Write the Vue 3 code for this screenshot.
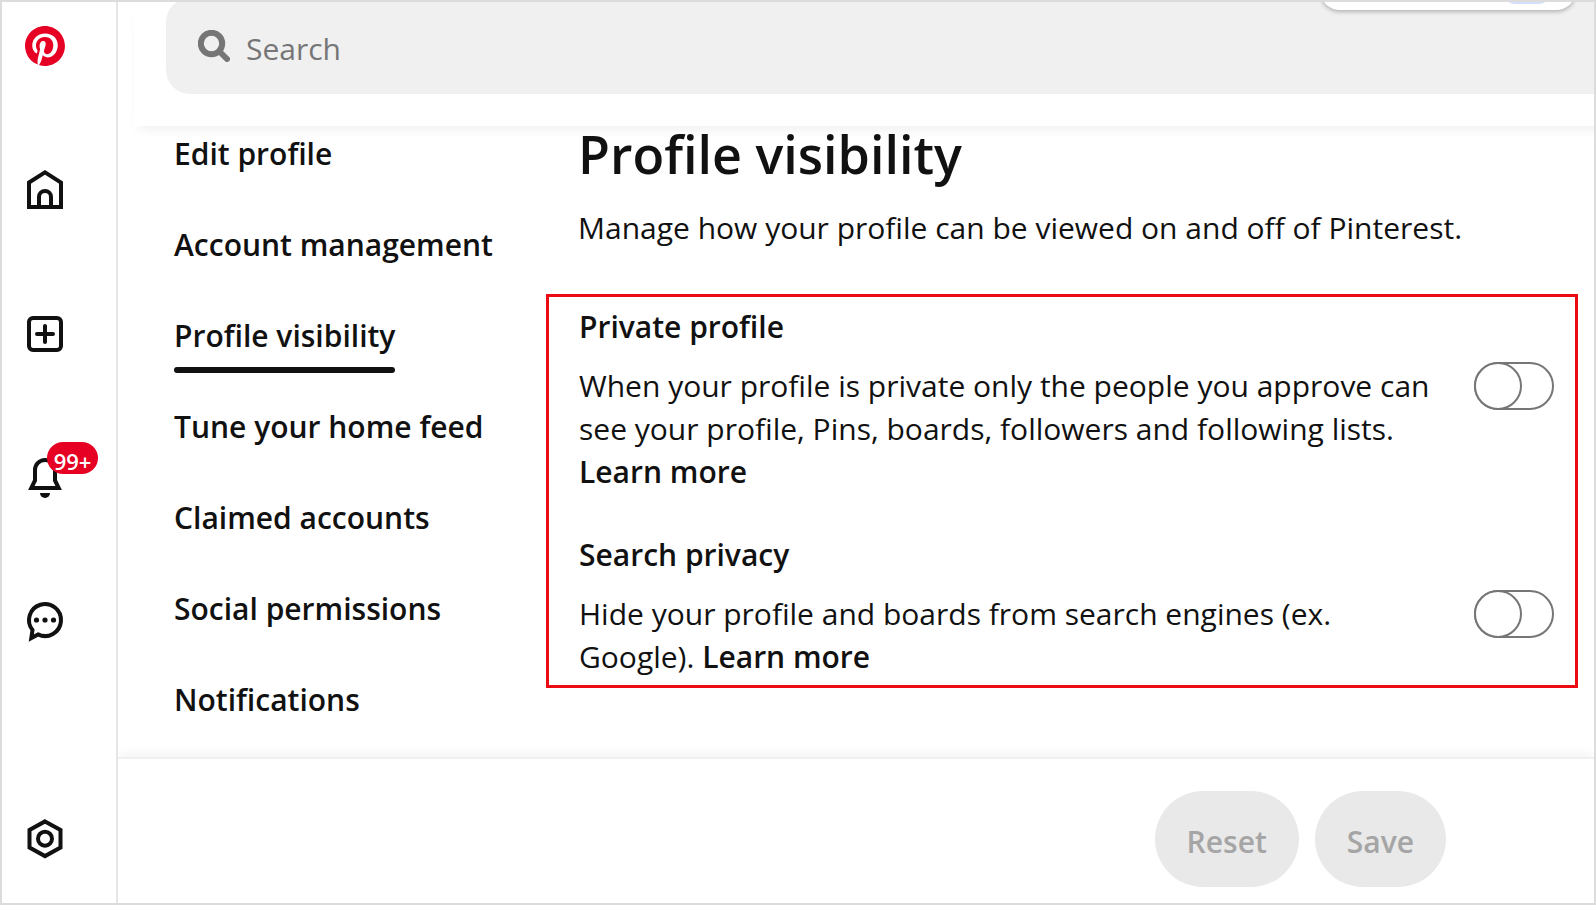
<script setup>
import { ref } from 'vue'

const search = ref('')

const menu = ref([
  { name: 'Edit profile', active: false },
  { name: 'Account management', active: false },
  { name: 'Profile visibility', active: true },
  { name: 'Tune your home feed', active: false },
  { name: 'Claimed accounts', active: false },
  { name: 'Social permissions', active: false },
  { name: 'Notifications', active: false }
])

const settings = ref([
  {
    id: 'private-profile',
    title: 'Private profile',
    text: 'When your profile is private only the people you approve can see your profile, Pins, boards, followers and following lists.',
    on: false
  },
  {
    id: 'search-privacy',
    title: 'Search privacy',
    text: 'Hide your profile and boards from search engines (ex. Google).',
    on: false
  }
])
</script>
<template>
  <div class="page">
    <nav class="sidebar" aria-label="Main">
      <a href="#" aria-label="Pinterest">
        <svg viewBox="-2.4 -2.4 28.8 28.8">
          <path
            fill="#e60023"
            d="M12.017 0C5.396 0 .029 5.367.029 11.987c0 5.079 3.158 9.417 7.618 11.162-.105-.949-.199-2.403.041-3.439.219-.937 1.406-5.957 1.406-5.957s-.359-.72-.359-1.781c0-1.663.967-2.911 2.168-2.911 1.024 0 1.518.769 1.518 1.688 0 1.029-.653 2.567-.992 3.992-.285 1.193.6 2.165 1.775 2.165 2.128 0 3.768-2.245 3.768-5.487 0-2.861-2.063-4.869-5.008-4.869-3.41 0-5.409 2.562-5.409 5.199 0 1.033.394 2.143.889 2.741.099.12.112.225.085.345-.09.375-.293 1.199-.334 1.363-.053.225-.172.271-.401.165-1.495-.69-2.433-2.878-2.433-4.646 0-3.776 2.748-7.252 7.92-7.252 4.158 0 7.392 2.967 7.392 6.923 0 4.135-2.607 7.462-6.233 7.462-1.214 0-2.354-.629-2.758-1.379l-.749 2.848c-.269 1.045-1.004 2.352-1.498 3.146 1.123.345 2.306.535 3.55.535 6.607 0 11.985-5.365 11.985-11.987C23.97 5.39 18.592.026 11.985.026L12.017 0z"
          />
        </svg>
      </a>
      <a href="#" aria-label="Home">
        <svg class="line" viewBox="0 0 48 48">
          <path d="M8 16.5L24 6.4L40 16.5V41H8Z" />
          <path d="M18 41V31a6 6 0 0 1 12 0V41" />
        </svg>
      </a>
      <a href="#" aria-label="Create">
        <svg class="line" viewBox="0 0 48 48">
          <rect x="8" y="8" width="32" height="32" rx="4" />
          <path d="M16 24H32M24 16V32" stroke-linecap="round" />
        </svg>
      </a>
      <a href="#" aria-label="Notifications" class="bell">
        <svg class="line" viewBox="0 0 48 48">
          <path d="M24 6A10 10 0 0 0 14 16V26.5L10.3 34H37.7L34 26.5V16A10 10 0 0 0 24 6Z" />
          <path class="solid" d="M19 39H29A5 5 0 0 1 19 39Z" />
        </svg>
        <span class="badge">99+</span>
      </a>
      <a href="#" aria-label="Messages">
        <svg class="line" viewBox="0 0 48 48">
          <path d="M11.5 32A16 16 0 1 1 17 36.4L10.3 40Z" />
          <circle class="solid" cx="15.5" cy="22" r="2.6" />
          <circle class="solid" cx="24" cy="22" r="2.6" />
          <circle class="solid" cx="32.5" cy="22" r="2.6" />
        </svg>
      </a>
      <a href="#" aria-label="Settings" class="bottom">
        <svg class="line" viewBox="0 0 48 48">
          <path d="M24 7.4L39.5 16V33.5L24 42.1L8.5 33.5V16Z" />
          <circle cx="24" cy="24.7" r="7" />
        </svg>
      </a>
    </nav>

    <div class="main">
      <header class="header">
        <label class="search">
          <svg viewBox="0 0 32 32">
            <circle cx="13.5" cy="13.5" r="10.7" />
            <path d="M21.5 21.5L29 29" />
          </svg>
          <input v-model="search" type="text" placeholder="Search" aria-label="Search" />
        </label>
      </header>
      <div class="popup"><span></span></div>

      <div class="body">
        <nav class="menu" aria-label="Settings">
          <a v-for="item in menu" :key="item.name" href="#" :class="{ active: item.active }">{{ item.name }}</a>
        </nav>
        <main class="content">
          <h1>Profile visibility</h1>
          <p class="intro">Manage how your profile can be viewed on and off of Pinterest.</p>
          <div class="panel">
            <section v-for="item in settings" :key="item.id">
              <h2><label :for="item.id">{{ item.title }}</label></h2>
              <div class="row">
                <p>{{ item.text }} <a href="#">Learn more</a></p>
                <input :id="item.id" v-model="item.on" type="checkbox" role="switch" />
              </div>
            </section>
          </div>
        </main>
      </div>

      <footer class="footer">
        <button type="button" disabled>Reset</button>
        <button type="button" disabled>Save</button>
      </footer>
    </div>
  </div>
</template>
<style>
body {
  margin: 0;
  background: #fff;
}
</style>
<style scoped>
*,
*::before,
*::after {
  box-sizing: border-box;
}

.page {
  display: flex;
  min-height: 100vh;
  border: 2px solid #dcdcdc;
  overflow: hidden;
  font-family: 'Open Sans', 'Noto Sans', sans-serif;
  font-size: 30px;
  line-height: 43px;
  color: #111;
}

a {
  color: inherit;
  text-decoration: none;
}

/* left icon bar */
.sidebar {
  display: flex;
  flex-direction: column;
  gap: 96px;
  flex: none;
  width: 116px;
  padding: 20px 0 41px 19px;
  border-right: 2px solid #e6e6e6;
}
.sidebar a {
  width: 48px;
  height: 48px;
}
.sidebar svg {
  display: block;
  width: 48px;
  height: 48px;
}
.sidebar .bottom {
  margin-top: auto;
}
.line {
  fill: none;
  stroke: #111;
  stroke-width: 4;
}
.line .solid {
  fill: #111;
  stroke: none;
}
.bell {
  position: relative;
}
.badge {
  position: absolute;
  top: -12px;
  left: 26px;
  width: 51px;
  height: 32px;
  border-radius: 16px;
  background: #e60023;
  color: #fff;
  font-size: 22px;
  font-weight: 600;
  line-height: 38px;
  text-align: center;
}

.main {
  position: relative;
  display: flex;
  flex-direction: column;
  flex: 1;
  min-width: 0;
  overflow: hidden;
}

/* top bar */
.header {
  margin: -4px -16px 0 16px;
  padding: 0 0 32px 32px;
  box-shadow: 0 8px 12px -6px rgba(0, 0, 0, 0.08);
}
.search {
  display: flex;
  align-items: center;
  gap: 16px;
  height: 96px;
  padding-left: 32px;
  border-radius: 24px 0 0 24px;
  background: #f0f0f0;
}
.search svg {
  flex: none;
  width: 32px;
  height: 32px;
  fill: none;
  stroke: #767676;
  stroke-width: 6;
  stroke-linecap: round;
}
.search input {
  flex: 1;
  min-width: 0;
  height: 48px;
  padding: 4px 0 0;
  border: none;
  outline: none;
  background: none;
  font: inherit;
  color: #111;
}
.search input::placeholder {
  color: #767676;
  opacity: 1;
}
.popup {
  position: absolute;
  top: -40px;
  right: 18px;
  width: 256px;
  height: 48px;
  border-radius: 20px;
  background: #fff;
  box-shadow: 0 2px 4px rgba(0, 0, 0, 0.25);
}
.popup span {
  position: absolute;
  right: 25px;
  bottom: 6px;
  width: 48px;
  height: 30px;
  border-radius: 12px;
  background: #d3e0fb;
}

.body {
  display: grid;
  grid-template-columns: 428px minmax(0, 1fr);
  flex: 1;
}

.menu {
  display: flex;
  flex-direction: column;
  align-items: flex-start;
  gap: 48px;
  padding: 6px 0 0 56px;
  font-weight: 600;
}
.menu a {
  position: relative;
}
.menu .active::after {
  content: '';
  position: absolute;
  left: 0;
  right: 0;
  bottom: -16px;
  height: 6px;
  border-radius: 3px;
  background: #111;
}

.content {
  padding-right: 16px;
}
h1 {
  margin: 0;
  padding-left: 32px;
  font-size: 52px;
  font-weight: 600;
  line-height: 56px;
}
.intro {
  margin: 24px 0 45px;
  padding-left: 32px;
}
.panel {
  display: flex;
  flex-direction: column;
  gap: 40px;
  padding: 8px 21px 7px 30px;
  border: 3px solid #ec0b12;
}
h2 {
  margin: 0 0 14px;
  font-size: 30px;
  font-weight: 600;
  line-height: 43px;
}
.row {
  display: flex;
  align-items: flex-start;
  justify-content: space-between;
  gap: 32px;
}
.row p {
  margin: 0;
  padding-top: 2px;
}
.row a {
  font-weight: 600;
}
.row input {
  appearance: none;
  display: flex;
  flex: none;
  width: 80px;
  height: 48px;
  margin: 0;
  border: 2px solid #767676;
  border-radius: 24px;
  background: #fff;
}
.row input::before {
  content: '';
  width: 48px;
  height: 48px;
  margin: -2px;
  border: 2px solid #767676;
  border-radius: 50%;
  background: #fff;
}
.row input:checked {
  justify-content: flex-end;
  background: #111;
}

/* bottom bar */
.footer {
  display: flex;
  justify-content: flex-end;
  gap: 16px;
  padding: 32px 148px 16px 0;
  border-top: 2px solid #f0f0f0;
  box-shadow: 0 -2px 12px rgba(0, 0, 0, 0.06);
}
button {
  height: 96px;
  padding: 4px 32px 0;
  border: none;
  border-radius: 48px;
  background: #e9e9e9;
  color: #a5a5a5;
  font: inherit;
  font-weight: 600;
}
</style>
